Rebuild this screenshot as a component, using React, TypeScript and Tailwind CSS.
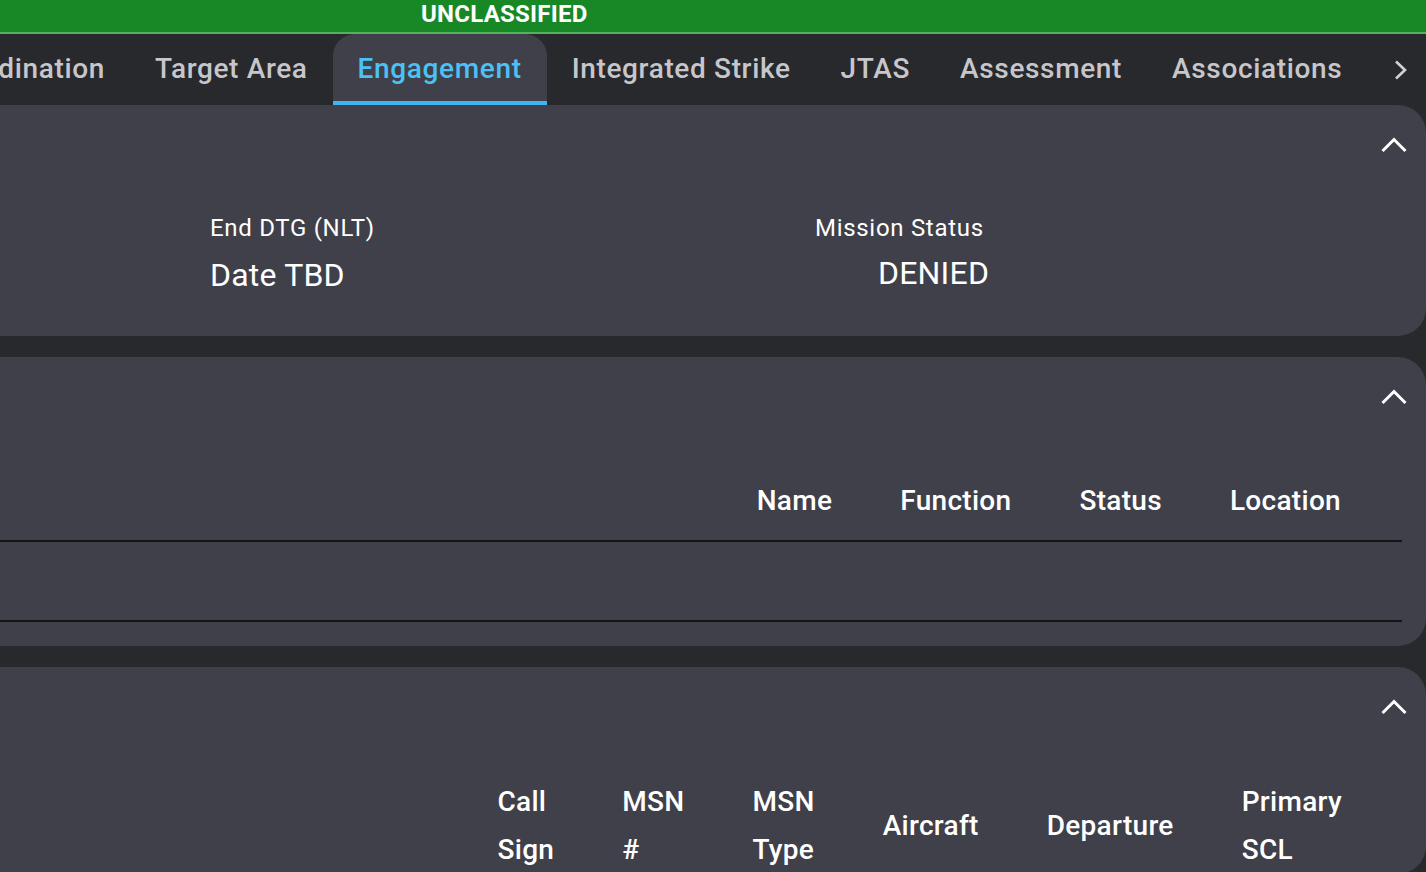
import type { ReactNode } from "react";

const TABS = [
  "Target Area",
  "Engagement",
  "Integrated Strike",
  "JTAS",
  "Assessment",
  "Associations",
];

const ACTIVE_TAB = "Engagement";

function ChevronUp() {
  return (
    <svg width="26" height="18" viewBox="0 0 26 18" fill="none">
      <polyline
        points="1.5,15 13,3.5 24.5,15"
        stroke="#ffffff"
        strokeWidth="3"
        strokeLinecap="butt"
        strokeLinejoin="miter"
      />
    </svg>
  );
}

function ChevronRight() {
  return (
    <svg width="16" height="20" viewBox="0 0 16 20" fill="none">
      <polyline
        points="3,1.5 12,10 3,18.5"
        stroke="#d2d2d6"
        strokeWidth="2.6"
      />
    </svg>
  );
}

function Panel({ children }: { children: ReactNode }) {
  return (
    <section className="rounded-r-[28px] bg-[#40404a]">
      <div className="flex h-[80px] items-center justify-end pr-[19px]">
        <ChevronUp />
      </div>
      {children}
    </section>
  );
}

function HeaderCell({ label }: { label: string }) {
  return (
    <div className="w-min text-[28px] font-medium leading-[48px] tracking-[0.3px] text-white">
      {label}
    </div>
  );
}

export default function App() {
  return (
    <div
      className="h-[872px] w-full overflow-hidden bg-[#28292d]"
      style={{ fontFamily: "Roboto, 'Noto Sans', sans-serif" }}
    >
      {/* classification banner */}
      <div className="flex h-[34px] items-center border-b-2 border-[#58b05c] bg-[#188826] pb-[4px] pl-[421px]">
        <span className="text-[24px] font-bold leading-none tracking-[0.25px] text-white">
          UNCLASSIFIED
        </span>
      </div>

      {/* tab strip, scrolled so the first tab is cut off */}
      <nav className="flex h-[71px] items-stretch bg-[#28292d]">
        <div className="flex w-[130px] shrink-0 items-center justify-end overflow-hidden">
          <span className="whitespace-nowrap pb-[2px] pr-[25px] text-[28px] font-medium tracking-[0.65px] text-[#c6c6cb]">
            Coordination
          </span>
        </div>
        {TABS.map((tab) => {
          const active = tab === ACTIVE_TAB;
          return (
            <div
              key={tab}
              className={
                active
                  ? "flex items-center whitespace-nowrap rounded-t-[22px] border-b-4 border-[#3eb6f3] bg-[#40404a] px-[25px] pt-[2px] text-[28px] font-medium tracking-[0.65px] text-[#4cc1f5]"
                  : "flex items-center whitespace-nowrap px-[25px] pb-[2px] text-[28px] font-medium tracking-[0.65px] text-[#c6c6cb]"
              }
            >
              {tab}
            </div>
          );
        })}
        <div className="flex flex-1 items-center justify-end pr-[17px]">
          <ChevronRight />
        </div>
      </nav>

      <div className="flex flex-col gap-[21px]">
        {/* summary */}
        <Panel>
          <div className="flex pb-[41px] pl-[210px] pt-[29px]">
            <div className="flex w-[605px] flex-col">
              <span className="text-[24px] leading-[28px] tracking-[0.7px] text-white">
                End DTG (NLT)
              </span>
              <span className="mt-[13px] text-[32px] leading-[40px] tracking-[0.2px] text-white">
                Date TBD
              </span>
            </div>
            <div className="flex flex-col">
              <span className="text-[24px] leading-[28px] tracking-[0.7px] text-white">
                Mission Status
              </span>
              <span className="mt-[11px] pl-[63px] text-[32px] leading-[40px] tracking-[0.2px] text-white">
                DENIED
              </span>
            </div>
          </div>
        </Panel>

        {/* personnel */}
        <Panel>
          <div className="mr-[24px] pb-[24px] pt-[25px]">
            <div className="flex h-[80px] items-center justify-end gap-[68px] border-b-2 border-[#141517] pr-[61px]">
              <HeaderCell label="Name" />
              <HeaderCell label="Function" />
              <HeaderCell label="Status" />
              <HeaderCell label="Location" />
            </div>
            <div className="h-[80px] border-b-2 border-[#141517]" />
          </div>
        </Panel>

        {/* missions */}
        <Panel>
          <div className="mr-[24px] pt-[31px]">
            <div className="flex items-center justify-end gap-[68px] pr-[60px]">
              <HeaderCell label="Call Sign" />
              <HeaderCell label="MSN #" />
              <HeaderCell label="MSN Type" />
              <HeaderCell label="Aircraft" />
              <HeaderCell label="Departure" />
              <HeaderCell label="Primary SCL" />
            </div>
          </div>
        </Panel>
      </div>
    </div>
  );
}
